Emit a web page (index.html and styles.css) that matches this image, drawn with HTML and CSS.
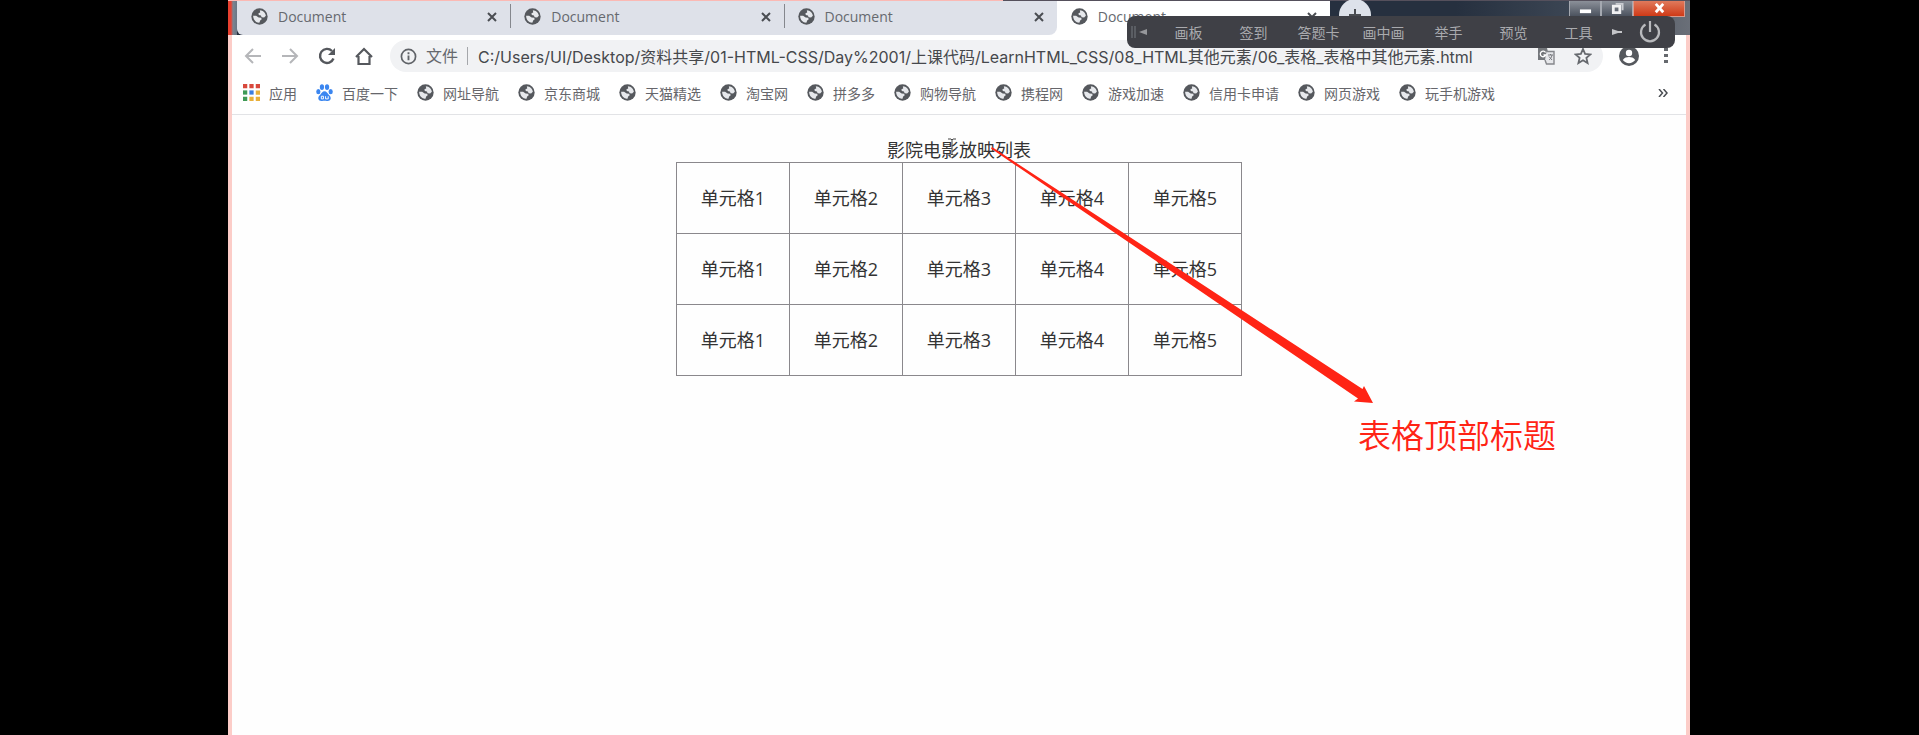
FILE: index.html
```
<!DOCTYPE html>
<html lang="zh-CN">
<head>
<meta charset="utf-8">
<title>Document</title>
<link rel="stylesheet" href="styles.css">
</head>
<body>
<svg class="defs" aria-hidden="true">
  <symbol id="globe" viewBox="0 0 24 24">
    <circle cx="12" cy="12" r="11.5" fill="#55585d"/>
    <path fill="#e6e8ec" d="M12.500 3C17 3.200 20.500 6.500 21 11l-2.500 2.500-3.500-.5-1-2.500-3-.5-.5-2.500 2.500-1z"/>
    <path fill="#e6e8ec" d="M3 11l4.200 0 3.600 2.300 3.500.4.900 2.200-2 1.300-1.500 3.800C6.800 20.600 3 16.700 3 11z"/>
  </symbol>
  <symbol id="close" viewBox="0 0 12 12">
    <path d="M2 2l8 8M10 2l-8 8" fill="none" stroke="#4a4d52" stroke-width="2"/>
  </symbol>
</svg>

<main class="window">
  <div class="titlebar">
    <div class="tabs">
      <div class="tab"><svg class="ico"><use href="#globe"/></svg><span>Document</span><button aria-label="关闭"><svg><use href="#close"/></svg></button></div>
      <div class="tab"><svg class="ico"><use href="#globe"/></svg><span>Document</span><button aria-label="关闭"><svg><use href="#close"/></svg></button></div>
      <div class="tab tab-before"><svg class="ico"><use href="#globe"/></svg><span>Document</span><button aria-label="关闭"><svg><use href="#close"/></svg></button></div>
      <div class="tab active"><svg class="ico"><use href="#globe"/></svg><span>Document</span><button aria-label="关闭"><svg><use href="#close"/></svg></button></div>
    </div>
    <button class="new-tab" aria-label="新标签页"><svg viewBox="0 0 12 12"><path d="M6 0v12M0 6h12" stroke="#4a4d52" stroke-width="2"/></svg></button>
    <div class="controls">
      <button class="ctl" aria-label="最小化"><svg viewBox="0 0 14 14"><path d="M1 8h12v4H1z" fill="#fff"/></svg></button>
      <button class="ctl" aria-label="还原"><svg viewBox="0 0 14 14"><path d="M5 2h7.500v7" fill="none" stroke="#c9cbd0" stroke-width="2"/><path d="M2.500 4.500h7v7h-7z" fill="none" stroke="#f0f0f2" stroke-width="3"/></svg></button>
      <button class="ctl ctl-close" aria-label="关闭窗口"><svg viewBox="0 0 14 14"><path d="M3 2l8 9M11 2l-8 9" stroke="#fff" stroke-width="3"/></svg></button>
    </div>
  </div>

  <div class="toolbar">
    <div class="nav">
      <button aria-label="后退"><svg viewBox="0 0 18 18"><path d="M17 9H2M9 2L2 9l7 7" fill="none" stroke="#b5b6b9" stroke-width="2"/></svg></button>
      <button aria-label="前进"><svg viewBox="0 0 18 18"><path d="M1 9h15M9 2l7 7-7 7" fill="none" stroke="#b5b6b9" stroke-width="2"/></svg></button>
      <button aria-label="重新加载"><svg viewBox="0 0 18 18"><path d="M15.500 11.500A7 7 0 1 1 14 4" fill="none" stroke="#55585d" stroke-width="2.400"/><path d="M17 1v7h-7z" fill="#55585d"/></svg></button>
      <button aria-label="主页"><svg viewBox="0 0 18 18"><path d="M1 10l8-8 8 8M3.500 9v8h11V9" fill="none" stroke="#55585d" stroke-width="2.200"/></svg></button>
    </div>
    <div class="omnibox">
      <svg class="ico" viewBox="0 0 18 18"><circle cx="9" cy="9" r="7.500" fill="none" stroke="#606368" stroke-width="1.800"/><path d="M9 8v5M9 4.500v2" stroke="#606368" stroke-width="2"/></svg>
      <label for="url">文件</label>
      <input id="url" type="text" value="C:/Users/UI/Desktop/资料共享/01-HTML-CSS/Day%2001/上课代码/LearnHTML_CSS/08_HTML其他元素/06_表格_表格中其他元素.html">
      <button aria-label="翻译"><svg viewBox="0 0 18 18"><path d="M1 1h9l3 12H1z" fill="#74777b"/><path d="M9.500 4.500H17V17H9.500L8 13" fill="#e6e7ea" stroke="#85878b" stroke-width="1.400"/><path d="M8.500 5.500A2.800 2.800 0 1 0 8.700 8H6.500" fill="none" stroke="#fff" stroke-width="1.300"/><path d="M11 8h5M13.500 7v1M15 8c-.5 3-2 4-3 5M12 9.500l3 3.500" stroke="#77797d" fill="none"/></svg></button>
      <button aria-label="收藏"><svg viewBox="0 0 18 18"><path d="M9 2l2.100 4.900 5.300.5-4 3.500 1.200 5.200L9 13.300l-4.600 2.800 1.200-5.200-4-3.500 5.300-.5z" fill="none" stroke="#66696e" stroke-width="1.800"/></svg></button>
    </div>
    <button class="avatar" aria-label="用户"><svg viewBox="0 0 20 20"><circle cx="10" cy="10" r="10" fill="#55585d"/><circle cx="10" cy="7" r="3.200" fill="#fff"/><path d="M3.800 14c1.500-2.400 4-3 6.200-3s4.700.6 6.200 3c-1.500 2-3.800 3.200-6.200 3.200S5.300 16 3.800 14z" fill="#fff"/></svg></button>
    <button class="more" aria-label="更多"><svg viewBox="0 0 4 18"><path d="M0 1h4v3H0zM0 7h4v3H0zM0 13h4v3H0z" fill="#66696e"/></svg></button>
  </div>

  <nav class="bookmarks">
    <a href="#"><svg class="ico" viewBox="0 0 16 16"><path d="M0 0h4v4H0zM6 0h4v4H6zM12 0h4v4h-4z" fill="#d8483c"/><path d="M0 6h4v4H0z" fill="#3f9a57"/><path d="M6 6h4v4H6z" fill="#3c7de0"/><path d="M12 6h4v4h-4zM6 12h4v4H6zM12 12h4v4h-4z" fill="#e9b03a"/><path d="M0 12h4v4H0z" fill="#3f9a57"/></svg>应用</a>
    <a href="#"><svg class="ico" viewBox="0 0 16 16"><g fill="#3b86f0"><ellipse cx="2.200" cy="7.200" rx="2" ry="2.500"/><ellipse cx="5.600" cy="2.900" rx="2" ry="2.700"/><ellipse cx="10.400" cy="2.900" rx="2" ry="2.700"/><ellipse cx="13.800" cy="7.200" rx="2" ry="2.500"/><path d="M8 6.800c2 0 2.800 2 4 3.200 1.400 1.300 2.200 2.400 1.700 4.200-.5 1.700-2 1.900-3.500 1.700-1.500-.2-2.900-.2-4.400 0-1.500.2-3 0-3.500-1.700-.5-1.800.3-2.900 1.700-4.200C5.200 8.800 6 6.800 8 6.800z"/></g><path d="M5 11.500h2v2.500H5zM9 11.500v2.500h2.500v-2.500" fill="none" stroke="#fff" stroke-width=".9"/></svg>百度一下</a>
    <a href="#"><svg class="ico"><use href="#globe"/></svg>网址导航</a>
    <a href="#"><svg class="ico"><use href="#globe"/></svg>京东商城</a>
    <a href="#"><svg class="ico"><use href="#globe"/></svg>天猫精选</a>
    <a href="#"><svg class="ico"><use href="#globe"/></svg>淘宝网</a>
    <a href="#"><svg class="ico"><use href="#globe"/></svg>拼多多</a>
    <a href="#"><svg class="ico"><use href="#globe"/></svg>购物导航</a>
    <a href="#"><svg class="ico"><use href="#globe"/></svg>携程网</a>
    <a href="#"><svg class="ico"><use href="#globe"/></svg>游戏加速</a>
    <a href="#"><svg class="ico"><use href="#globe"/></svg>信用卡申请</a>
    <a href="#"><svg class="ico"><use href="#globe"/></svg>网页游戏</a>
    <a href="#"><svg class="ico"><use href="#globe"/></svg>玩手机游戏</a>
    <button class="overflow" aria-label="更多书签"><svg viewBox="0 0 10 8"><path d="M1 0l3.500 4L1 8M5.500 0L9 4 5.500 8" fill="none" stroke="#4a4d52" stroke-width="1.500"/></svg></button>
  </nav>

  <section class="page">
    <div class="sheet">
      <table>
        <caption>影院电影放映列表</caption>
        <tbody>
          <tr><td>单元格1</td><td>单元格2</td><td>单元格3</td><td>单元格4</td><td>单元格5</td></tr>
          <tr><td>单元格1</td><td>单元格2</td><td>单元格3</td><td>单元格4</td><td>单元格5</td></tr>
          <tr><td>单元格1</td><td>单元格2</td><td>单元格3</td><td>单元格4</td><td>单元格5</td></tr>
        </tbody>
      </table>
      <svg class="ibeam" viewBox="0 0 8 18"><path d="M0 1h3l1 1 1-1h3M4 2v14M0 17h3l1-1 1 1h3" fill="none" stroke="#444" stroke-width="1"/></svg>
      <svg class="arrow" viewBox="0 0 382 256"><path d="M1 0L371.500 242 373 239 382 256 363 254.500 367 251.500 0 1.500z" fill="#ff2415"/></svg>
      <p class="note">表格顶部标题</p>
    </div>
  </section>

  <div class="meeting">
    <svg class="grip" viewBox="0 0 18 14"><path d="M1 1v12M4 1v12" stroke="#777a80" stroke-width="1"/><path d="M8 7l8-3v6z" fill="#96979b"/></svg>
    <button>画板</button><button>签到</button><button>答题卡</button><button>画中画</button><button>举手</button><button>预览</button><button>工具</button>
    <svg class="next" viewBox="0 0 12 8"><path d="M1 1l6 2h4v2H7L1 7z" fill="#c4c5c8"/></svg>
    <button class="power" aria-label="退出"><svg viewBox="0 0 22 22"><path d="M6.500 3.500a9 9 0 1 0 9 0M11 0v11" fill="none" stroke="#b9babd" stroke-width="2.200"/></svg></button>
  </div>
</main>
</body>
</html>
```
FILE: styles.css
```
* { box-sizing: border-box; }

body {
  margin: 0;
  padding: 0 229px 0 228px;
  background: #000;
  font-family: "Open Sans", "Noto Sans CJK SC", sans-serif;
  color: #333;
}

button {
  display: flex;
  align-items: center;
  justify-content: center;
  padding: 0;
  border: 0;
  background: none;
  font: inherit;
  color: inherit;
}

.defs { position: absolute; width: 0; height: 0; }
.ico { flex: none; width: 17px; height: 17px; }

.window {
  position: relative;
  display: flex;
  flex-direction: column;
  min-height: 100vh;
  background: #fefefe;
  border: solid #fccdc8;
  border-width: 0 4px;
}

/* title bar */
.titlebar {
  display: flex;
  height: 35px;
  margin: 0 -4px;
  padding: 1px 0 0 9px;
  background:
    linear-gradient(90deg, #fbb9b4 53%, #55505c 53%) top / 100% 1px no-repeat,
    linear-gradient(90deg, #e8402f 0, #e8402f 3px, #7b8592 5px, #6b7684 9px, transparent 9px),
    linear-gradient(90deg, #26303f 0, #26303f 84%, #3c4654 92%, #6a6f78 100%);
}

.tabs {
  display: flex;
  width: 1093px;
  background: linear-gradient(#fff, #fff) right / 300px 100% no-repeat;
}

.tab {
  display: flex;
  flex: 1;
  align-items: center;
  gap: 10px;
  padding: 0 12px 3px 14px;
  background: #dee1e9;
  font-size: 14px;
  color: #66696f;
}

.tab:first-child { border-bottom-left-radius: 6px; }
.tab + .tab { background: linear-gradient(#85878d, #85878d) 0 3px / 1px 24px no-repeat #dee1e9; }
.tab span { flex: 1; }
.tab button { width: 12px; height: 12px; }
.tab button svg { width: 12px; height: 12px; }
.tab.tab-before { border-bottom-right-radius: 8px; }
.tab.active { background: #fff; }

.new-tab {
  width: 32px;
  height: 32px;
  margin: -2px 0 0 9px;
  border-radius: 50%;
  background: #dde2ea;
}
.new-tab svg { width: 12px; height: 12px; }

.controls { display: flex; height: 16px; margin: 0 5px 0 auto; }
.ctl {
  width: 32px;
  border: 1px solid #a4a8b0;
  border-top: 0;
  background: linear-gradient(#8b9099, #4c535f);
}
.ctl svg { width: 13px; height: 13px; }
.ctl-close { width: 52px; border-color: #d99a8c; background: linear-gradient(#e07a5c, #cf3a17); }

/* toolbar */
.toolbar {
  display: flex;
  align-items: center;
  height: 41px;
  padding: 1px 18px 0 12px;
  background: #fff;
}

.nav { display: flex; gap: 19px; margin-right: 17px; }
.nav svg { display: block; width: 18px; height: 18px; }

.omnibox {
  display: flex;
  flex: 1;
  align-items: center;
  height: 32px;
  padding: 0 11px 0 10px;
  border-radius: 16px;
  background: #f1f2f4;
  font-size: 16px;
}
.omnibox label {
  margin-left: 9px;
  padding-right: 9px;
  border-right: 1px solid #a5a7ab;
  line-height: 18px;
  color: #66696e;
}
.omnibox input {
  flex: 1;
  min-width: 0;
  height: 28px;
  margin-left: 10px;
  padding: 0;
  border: 0;
  background: none;
  font-family: Inter, "Noto Sans CJK SC", sans-serif;
  font-size: 16px;
  color: #46484c;
}
.omnibox button { width: 18px; margin-left: 19px; }
.omnibox button svg { width: 18px; height: 18px; }

.avatar { margin-left: 16px; }
.avatar svg { width: 20px; height: 20px; }
.more { margin-left: 25px; }
.more svg { width: 4px; height: 18px; }

/* bookmarks */
.bookmarks {
  display: flex;
  align-items: center;
  gap: 19px;
  height: 39px;
  padding: 0 18px 5px 11px;
  border-bottom: 1px solid #e2e3e6;
  background: #fff;
  font-size: 14px;
}
.bookmarks a {
  display: flex;
  align-items: center;
  gap: 9px;
  white-space: nowrap;
  color: #66666b;
  text-decoration: none;
}
.overflow { margin-left: auto; }
.overflow svg { width: 10px; height: 8px; }

/* page */
.page {
  display: flex;
  flex: 1;
  justify-content: center;
  align-items: flex-start;
  padding-top: 23px;
}
.sheet { position: relative; font-size: 18px; line-height: 24px; }

table { border-collapse: collapse; }
caption { white-space: nowrap; }
td {
  width: 113px;
  padding: 23px 0;
  border: 1px solid #8a888c;
  text-align: center;
}

/* pen marks over the page */
.ibeam { position: absolute; left: 272px; top: 0; width: 8px; height: 18px; }
.arrow { position: absolute; left: 315px; top: 9px; width: 382px; height: 256px; }
.note {
  position: absolute;
  left: 682px;
  top: 272px;
  margin: 0;
  font-family: "Noto Sans CJK SC", sans-serif;
  font-size: 33px;
  font-weight: 350;
  line-height: 48px;
  white-space: nowrap;
  color: #ff2415;
}

/* meeting toolbar */
.meeting {
  position: absolute;
  top: 16px;
  right: 11px;
  display: flex;
  align-items: center;
  width: 548px;
  height: 32px;
  padding: 0 14px 0 4px;
  border-radius: 8px;
  background: #3f4046;
  font-size: 14px;
  color: #a9aaae;
}
.meeting button { flex: 1; }
.grip { width: 18px; height: 14px; margin-right: 7px; }
.next { width: 12px; height: 8px; }
.meeting .power { flex: none; margin-left: 16px; }
.power svg { width: 22px; height: 22px; }
```
